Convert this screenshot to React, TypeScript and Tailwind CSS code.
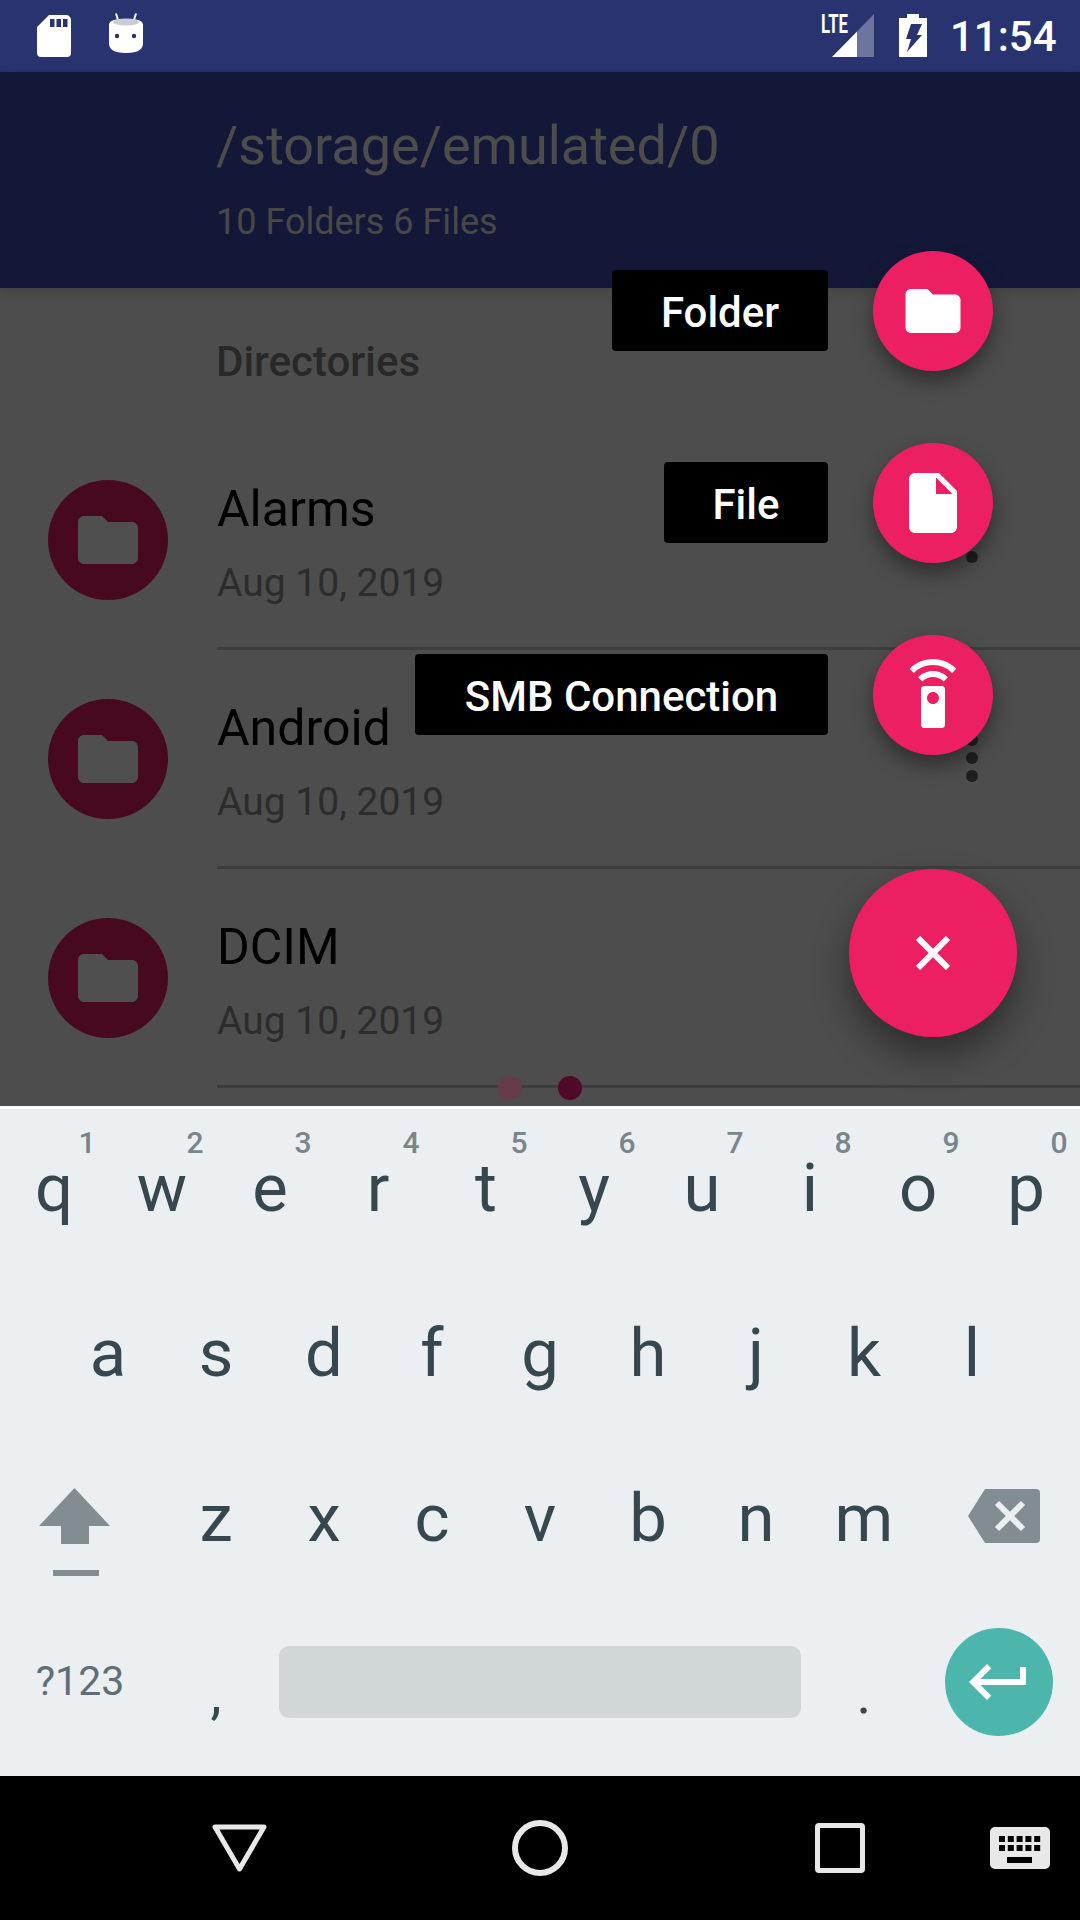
import type { ReactNode } from 'react'

const FOLDER = 'M10 4H4c-1.1 0-2 .9-2 2v12c0 1.1.9 2 2 2h16c1.1 0 2-.9 2-2V8c0-1.1-.9-2-2-2h-8l-2-2z'
const FILE = 'M6 2c-1.1 0-1.99.9-1.99 2L4 20c0 1.1.89 2 1.99 2H18c1.1 0 2-.9 2-2V8l-6-6H6zm7 7V3.5L18.5 9H13z'
const REMOTE =
  'M15 9H9c-.55 0-1 .45-1 1v12c0 .55.45 1 1 1h6c.55 0 1-.45 1-1V10c0-.55-.45-1-1-1zm-3 6c-1.1 0-2-.9-2-2s.9-2 2-2 2 .9 2 2-.9 2-2 2zM7.05 6.05l1.41 1.41C9.37 6.56 10.62 6 12 6s2.63.56 3.54 1.46l1.41-1.41C15.68 4.78 13.93 4 12 4s-3.68.78-4.95 2.05zM12 0C8.96 0 6.21 1.23 4.22 3.22l1.41 1.41C7.26 3.01 9.51 2 12 2s4.74 1.01 6.36 2.64l1.41-1.41C17.79 1.23 15.04 0 12 0z'
const RETURN = 'M19 7v4H5.83l3.58-3.59L8 6l-6 6 6 6 1.41-1.41L5.83 13H21V7z'

const DIRS = ['Alarms', 'Android', 'DCIM']
const ROW1 = [
  ['q', '1'],
  ['w', '2'],
  ['e', '3'],
  ['r', '4'],
  ['t', '5'],
  ['y', '6'],
  ['u', '7'],
  ['i', '8'],
  ['o', '9'],
  ['p', '0'],
]
const ROW2 = ['a', 's', 'd', 'f', 'g', 'h', 'j', 'k', 'l']
const ROW3 = ['z', 'x', 'c', 'v', 'b', 'n', 'm']

function Mat({ d, size, fill = 'white' }: { d: string; size: string; fill?: string }) {
  return (
    <svg viewBox="0 0 24 24" className={size} fill={fill}>
      <path d={d} />
    </svg>
  )
}

function StatusBar() {
  return (
    <div className="flex h-[72px] shrink-0 items-start bg-[#283370] text-white">
      <svg viewBox="0 0 34 42" className="ml-[37px] mt-[15px] h-[42px] w-[34px]" fill="white">
        <path
          fillRule="evenodd"
          d="M12 0H29a5 5 0 0 1 5 5V38a4 4 0 0 1-4 4H4a4 4 0 0 1-4-4V12ZM13 4V12H17.5V4ZM19.5 4V12H24V4ZM26 4V12H30.5V4Z"
        />
      </svg>
      <svg viewBox="0 0 34 40" className="ml-[38px] mt-[13px] h-[40px] w-[34px]" fill="white">
        <path d="M7 .5L9 7M27 .5L25 7" stroke="white" strokeWidth="2" />
        <path d="M0 12C0 8 4 6 17 6C30 6 34 8 34 12V30C34 36 30 40 17 40C4 40 0 36 0 30Z" />
        <ellipse cx="17" cy="9" rx="13" ry="3.5" fill="#c9ccd9" />
        <circle cx="8" cy="23" r="2.2" fill="#283370" />
        <circle cx="25" cy="23" r="2.2" fill="#283370" />
      </svg>
      <svg viewBox="0 0 53 43" className="ml-[678px] mt-[14px] h-[43px] w-[53px] overflow-visible" fill="white">
        <text x="0" y="19" fontSize="25" fontWeight="700" textLength="27" lengthAdjust="spacingAndGlyphs">
          LTE
        </text>
        <polygon points="11,43 36,17.4 36,43" />
        <polygon points="36,17.4 53,0 53,43 36,43" fillOpacity="0.32" />
      </svg>
      <svg viewBox="0 0 28 43" className="ml-[25px] mt-[14px] h-[43px] w-[28px]" fill="white">
        <path d="M8 0H20V4H28V43H0V4H8Z" />
        <polygon points="12,10 23,10 18,21 23,21 8,38 12,25 7,25" fill="#283370" />
      </svg>
      <span className="ml-[23px] mt-[12px] text-[42px] font-medium leading-[50px]">11:54</span>
    </div>
  )
}

function Toolbar() {
  return (
    <div className="z-10 flex h-[216px] shrink-0 flex-col bg-[#141838] pl-[216px] pt-[39px] text-[#4c4c4c] shadow-[0_4px_12px_rgba(0,0,0,0.14)]">
      <div className="text-[54px] leading-[70px]">/storage/emulated/0</div>
      <div className="mt-[19px] text-[36px] leading-[44px] text-[#484848]">10 Folders 6 Files</div>
    </div>
  )
}

function DirRow({ name }: { name: string }) {
  return (
    <div className="flex h-[219px] shrink-0">
      <div className="flex w-[217px] shrink-0 items-center pl-[48px] pb-[2px]">
        <div className="flex h-[120px] w-[120px] items-center justify-center rounded-full bg-[#47091f]">
          <Mat d={FOLDER} size="h-[72px] w-[72px]" fill="#4f4f4f" />
        </div>
      </div>
      <div className="flex flex-1 items-center justify-between border-b-[3px] border-[#3e3e3e] pr-[102px]">
        <div className="flex flex-col pt-[10px]">
          <div className="text-[50px] leading-[56px] text-black">{name}</div>
          <div className="mt-[21px] text-[39px] leading-[50px] text-[#2c2c2c]">Aug 10, 2019</div>
        </div>
        <div className="flex flex-col gap-[6px]">
          <div className="h-[12px] w-[12px] rounded-full bg-[#1f1f1f]" />
          <div className="h-[12px] w-[12px] rounded-full bg-[#1f1f1f]" />
          <div className="h-[12px] w-[12px] rounded-full bg-[#1f1f1f]" />
        </div>
      </div>
    </div>
  )
}

function FabItem({ label, icon, labelW }: { label: string; icon: ReactNode; labelW: string }) {
  return (
    <div className="flex h-[120px] items-center justify-end gap-[45px]">
      <div
        className={`mb-[2px] flex h-[81px] items-center justify-center rounded-[4px] bg-black pt-[6px] text-[42px] font-medium leading-none text-white ${labelW}`}
      >
        {label}
      </div>
      <div className="flex h-[120px] w-[120px] items-center justify-center rounded-full bg-[#ec1f63] shadow-[0_10px_20px_rgba(0,0,0,0.4)]">
        {icon}
      </div>
    </div>
  )
}

function Key({ label, hint }: { label: string; hint?: string }) {
  return (
    <div className="relative flex h-[165px] w-[108px] items-center justify-center text-[67px] leading-none text-[#37474f]">
      {label}
      {hint && (
        <span className="absolute left-[76px] top-[22px] w-[22px] text-center text-[30px] font-medium leading-[30px] text-[#78858d]">
          {hint}
        </span>
      )}
    </div>
  )
}

function Keyboard() {
  return (
    <div className="flex h-[670px] shrink-0 flex-col border-t-[3px] border-[#fbfcfc] bg-[#eceff1]">
      <div className="-mt-[3px] flex">
        {ROW1.map(([k, n]) => (
          <Key key={k} label={k} hint={n} />
        ))}
      </div>
      <div className="flex pl-[54px]">
        {ROW2.map((k) => (
          <Key key={k} label={k} />
        ))}
      </div>
      <div className="flex">
        <div className="h-[165px] w-[162px] pl-[39px] pt-[52px]">
          <svg viewBox="0 0 71 88" className="h-[88px] w-[71px]" fill="#828d92">
            <polygon points="35.5,0 71,38 50,38 50,56 22,56 22,38 0,38" />
            <rect x="14" y="82" width="46" height="6" />
          </svg>
        </div>
        {ROW3.map((k) => (
          <Key key={k} label={k} />
        ))}
        <div className="flex h-[165px] w-[162px] items-center justify-end pb-[6px] pr-[40px]">
          <svg viewBox="0 0 72 54" className="h-[54px] w-[72px]">
            <path d="M17 0H68a4 4 0 0 1 4 4V50a4 4 0 0 1-4 4H17L0 27Z" fill="#828d92" />
            <path d="M29 14L55 40M55 14L29 40" stroke="#eceff1" strokeWidth="6" />
          </svg>
        </div>
      </div>
      <div className="flex h-[165px] items-center pb-[4px]">
        <div className="w-[162px] pr-[2px] text-center text-[41px] leading-none text-[#5f6e76]">?123</div>
        <div className="flex w-[108px] justify-center pt-[24px] text-[56px] leading-none text-[#37474f]">,</div>
        <div className="px-[9px]">
          <div className="h-[72px] w-[522px] rounded-[10px] bg-[#d1d6d9]" />
        </div>
        <div className="flex w-[108px] justify-center pt-[24px] text-[56px] leading-none text-[#37474f]">.</div>
        <div className="flex w-[162px] justify-center">
          <div className="flex h-[108px] w-[108px] items-center justify-center rounded-full bg-[#4db6ac]">
            <Mat d={RETURN} size="h-[72px] w-[72px]" />
          </div>
        </div>
      </div>
    </div>
  )
}

function NavBar() {
  return (
    <div className="flex h-[144px] shrink-0 items-center bg-black">
      <svg viewBox="0 0 55 48" className="ml-[212px] h-[48px] w-[55px]" fill="none" stroke="#e8e8e8" strokeWidth="5" strokeLinejoin="round">
        <polygon points="3,3 52,3 27.5,45" />
      </svg>
      <div className="ml-[245px] h-[56px] w-[56px] rounded-full border-[6px] border-[#e8e8e8]" />
      <div className="ml-[247px] h-[50px] w-[50px] rounded-[4px] border-[5px] border-[#e8e8e8]" />
      <svg viewBox="0 0 60 42" className="ml-[125px] h-[42px] w-[60px]">
        <rect width="60" height="42" rx="5" fill="#e8e8e8" />
        <g fill="#000">
          {[9, 17.8, 26.6, 35.4, 44.2].map((x) => (
            <rect key={x} x={x} y="9" width="6" height="6" />
          ))}
          {[9, 17.8, 26.6, 35.4, 44.2].map((x) => (
            <rect key={x} x={x} y="18" width="6" height="6" />
          ))}
          <rect x="17" y="30" width="25" height="6" />
        </g>
      </svg>
    </div>
  )
}

export default function App() {
  return (
    <div className="relative flex h-[1920px] w-[1080px] flex-col overflow-hidden bg-[#4d4d4d] font-[Roboto,sans-serif]">
      <StatusBar />
      <Toolbar />
      <div className="relative flex flex-1 flex-col overflow-hidden">
        <div className="flex h-[143px] shrink-0 items-center pl-[216px] pt-[4px] text-[42px] font-medium text-[#282828]">
          Directories
        </div>
        {DIRS.map((d) => (
          <DirRow key={d} name={d} />
        ))}
        {/* pager dots sit on top of the last divider */}
        <div className="absolute bottom-[6px] left-[498px] flex gap-[36px]">
          <div className="h-[24px] w-[24px] rounded-full bg-[#663c4a]" />
          <div className="h-[24px] w-[24px] rounded-full bg-[#4f0a2a]" />
        </div>
      </div>
      <Keyboard />
      <NavBar />

      {/* speed dial over the list */}
      <div className="absolute right-[87px] top-[251px] z-20 flex flex-col gap-[72px]">
        <FabItem label="Folder" labelW="w-[216px]" icon={<Mat d={FOLDER} size="h-[66px] w-[66px]" />} />
        <FabItem label="File" labelW="w-[164px]" icon={<Mat d={FILE} size="h-[72px] w-[72px]" />} />
        <FabItem label="SMB Connection" labelW="w-[413px]" icon={<Mat d={REMOTE} size="h-[72px] w-[72px]" />} />
      </div>
      <div className="absolute left-[849px] top-[869px] z-20 flex h-[168px] w-[168px] items-center justify-center rounded-full bg-[#ec1f63] shadow-[0_18px_36px_rgba(0,0,0,0.42)]">
        <svg viewBox="0 0 34 34" className="h-[34px] w-[34px]" stroke="white" strokeWidth="6">
          <path d="M2 2L32 32M32 2L2 32" />
        </svg>
      </div>
    </div>
  )
}
